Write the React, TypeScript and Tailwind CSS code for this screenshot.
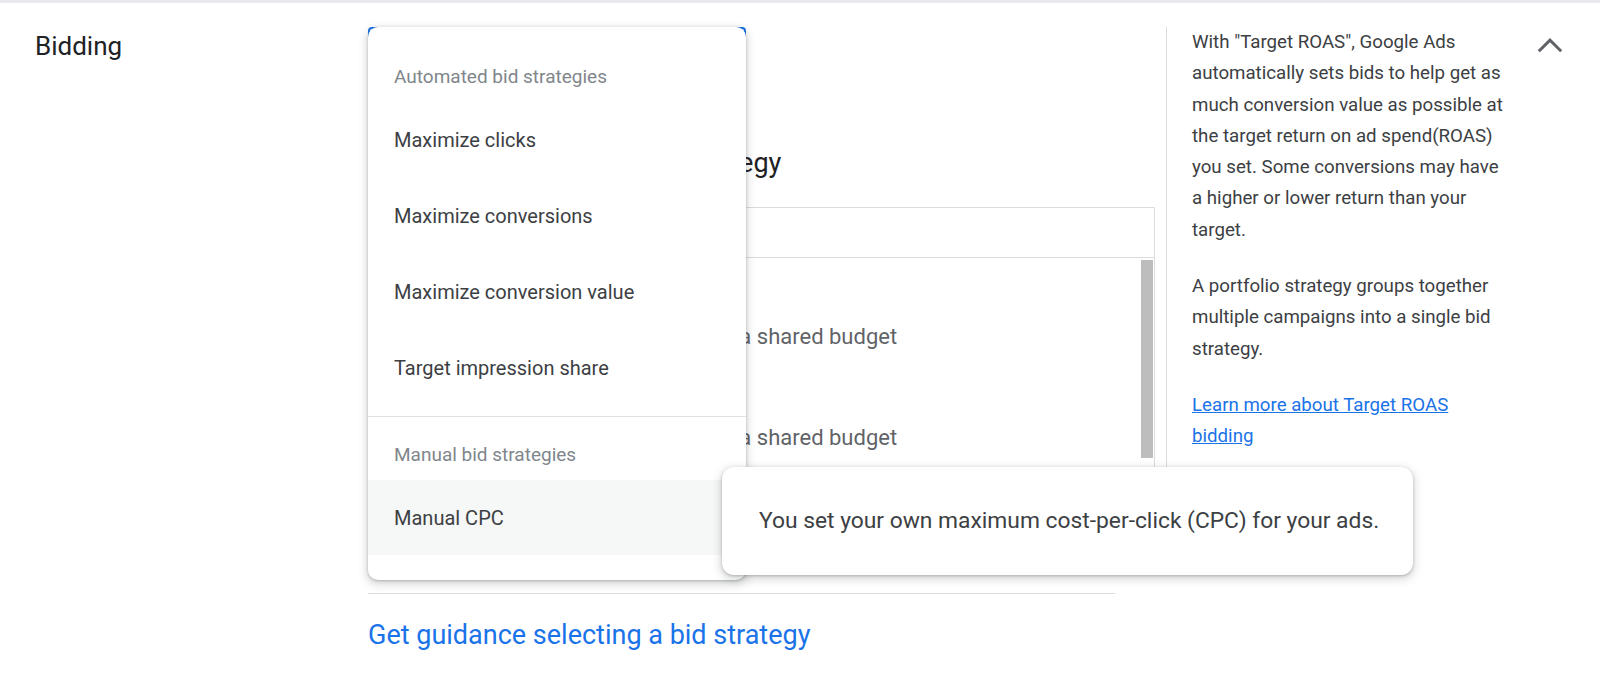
import React from 'react'

const automated = [
  'Maximize clicks',
  'Maximize conversions',
  'Maximize conversion value',
  'Target impression share',
]

const portfolios = [
  { name: 'Portfolio 1', note: 'Uses a portfolio bid strategy with a shared budget' },
  { name: 'Portfolio 2', note: 'Uses a portfolio bid strategy with a shared budget' },
]

const ChevronUp = () => (
  <svg width="26" height="15" viewBox="0 0 26 15" fill="none">
    <polyline points="1.8,13.2 13,2.2 24.2,13.2" stroke="#5f6368" strokeWidth="3" />
  </svg>
)

const BidMenu: React.FC = () => {
  return (
    <div className="absolute left-0 top-0 z-10 flex w-[378px] flex-col rounded-[10px] bg-white pt-[25px] pb-[25px] shadow-[0_3px_8px_2px_rgba(60,64,67,0.18),0_1px_3px_rgba(60,64,67,0.3)]">
      <div className="flex h-[50px] items-center px-[26px] text-[19px] text-[#80868b]">Automated bid strategies</div>
      {automated.map((label) => (
        <div key={label} className="flex h-[76px] items-center px-[26px] text-[20px] text-[#3c4043]">
          {label}
        </div>
      ))}
      <div className="mt-[10px] border-t border-[#e0e0e0] pt-[13px]">
        <div className="flex h-[50px] items-center px-[26px] text-[19px] text-[#80868b]">Manual bid strategies</div>
        <div className="flex h-[75px] items-center bg-[#f6f7f7] px-[26px] text-[20px] text-[#3c4043]">Manual CPC</div>
      </div>
    </div>
  )
}

export default function App() {
  return (
    <div className="relative h-[686px] w-full overflow-hidden border-t-[3px] border-[#e8eaed] bg-white font-['Roboto',sans-serif]">
      <div className="flex pt-[24px]">
        {/* section label */}
        <div className="w-[368px] shrink-0 pl-[35px] pt-[3px]">
          <h2 className="text-[26px] leading-[32px] text-[#202124]">Bidding</h2>
        </div>

        {/* main column */}
        <div className="w-[798px] shrink-0">
          <div className="relative w-[378px]">
            <div className="h-[56px] rounded-[4px] border-2 border-[#1a73e8]" />
            <BidMenu />
          </div>

          <h3 className="mt-[62px] pl-[25px] text-[27px] leading-[36px] text-[#202124]">Or, select a portfolio bid strategy</h3>

          <div className="mt-[26px] w-[787px]">
            <div className="h-[51px] border border-[#dadce0] px-[26px]" />
            <div className="flex h-[232px] border-x border-[#dadce0]">
              <div className="flex-1 pt-[12px]">
                {portfolios.map((p) => (
                  <div key={p.name} className="flex h-[101px] flex-col justify-center pl-[43px]">
                    <span className="text-[22px] leading-[32px] text-[#3c4043]">{p.name}</span>
                    <span className="text-[22px] leading-[32px] text-[#5f6368]">{p.note}</span>
                  </div>
                ))}
              </div>
              <div className="w-[13px] pt-[2px] pr-[1px]">
                <div className="h-[198px] bg-[#bdbdbd]" />
              </div>
            </div>
          </div>

          <div className="mt-[103px] w-[747px] border-t border-[#dadce0]" />
          <a className="mt-[23px] block text-[27px] leading-[36px] text-[#1a73e8]">Get guidance selecting a bid strategy</a>
        </div>

        {/* help column */}
        <div className="flex h-[535px] flex-1 border-l border-[#dadce0] pl-[25px]">
          <div className="w-[320px] text-[18.7px] leading-[31.3px] text-[#3c4043]">
            <p className="mb-[25px]">
              With "Target ROAS", Google Ads automatically sets bids to help get as much conversion value as possible at the target return on ad spend(ROAS) you set. Some conversions may have a higher or lower return than your target.
            </p>
            <p className="mb-[25px]">A portfolio strategy groups together multiple campaigns into a single bid strategy.</p>
            <a className="text-[#1a73e8] underline">Learn more about Target ROAS bidding</a>
          </div>
          <div className="ml-auto mr-[37px] pt-[11px]">
            <ChevronUp />
          </div>
        </div>
      </div>

      {/* tooltip over Manual CPC */}
      <div className="absolute left-[722px] top-[464px] z-20 flex h-[108px] w-[691px] items-center rounded-[12px] bg-white pl-[37px] text-[22.8px] text-[#3c4043] shadow-[0_3px_8px_2px_rgba(60,64,67,0.18),0_1px_3px_rgba(60,64,67,0.3)]">
        You set your own maximum cost-per-click (CPC) for your ads.
      </div>
    </div>
  )
}
